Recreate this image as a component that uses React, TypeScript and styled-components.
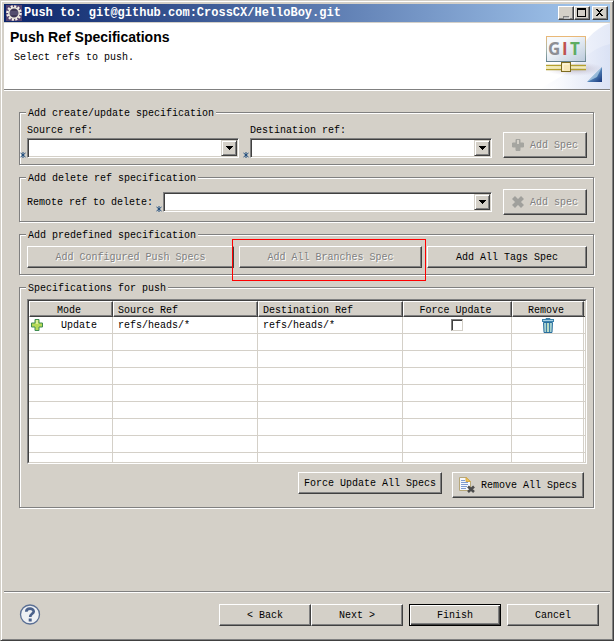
import React from "react";
import styled, { createGlobalStyle, css } from "styled-components";

const face = "#d4d0c8";
const gray = "#808080";
const dark = "#404040";
const mono = '"Liberation Mono", "Courier New", monospace';

const GlobalStyle = createGlobalStyle`
  *, *::before, *::after { box-sizing: border-box; }
  body {
    margin: 0;
    background: ${face};
    color: #000;
    font: 10px/12px ${mono};
  }
  button, select, input { font: inherit; color: inherit; margin: 0; }
`;

const Window = styled.div`
  display: flex;
  flex-direction: column;
  min-height: 100vh;
  padding: 3px;
  background: ${face};
  border: 1px solid;
  border-color: ${face} ${dark} ${dark} ${face};
  box-shadow: inset 1px 1px 0 #fff, inset -1px -1px 0 ${gray};
`;

const TitleBar = styled.header`
  display: flex;
  align-items: center;
  height: 18px;
  margin-bottom: 1px;
  padding: 0 2px;
  background: linear-gradient(90deg, #0a246a, #a6caf0);
`;

const TitleText = styled.h1`
  flex: 1;
  margin: 0 0 0 2px;
  color: #fff;
  font: bold 12px/18px ${mono};
  white-space: nowrap;
  overflow: hidden;
`;

const TitleButton = styled.button<{ $apart?: boolean }>`
  display: block;
  width: 16px;
  height: 14px;
  margin-left: ${(p) => (p.$apart ? 2 : 0)}px;
  padding: 0;
  background: ${face};
  border: 1px solid;
  border-color: #fff ${dark} ${dark} #fff;
  box-shadow: inset -1px -1px 0 ${gray};
  svg { display: block; }
`;

const Banner = styled.div`
  display: flex;
  justify-content: space-between;
  height: 68px;
  background: #fff;
  border-bottom: 1px solid #fff;
  box-shadow: inset 0 -1px 0 ${gray};
  svg { display: block; flex: none; }
`;

const BannerTitle = styled.h2`
  margin: 6px 0 0 6px;
  font: bold 14px/17px "Liberation Sans", Arial, sans-serif;
`;

const BannerHint = styled.p`
  margin: 6px 0 0 10px;
`;

const Main = styled.main`
  display: flex;
  flex: 1;
  flex-direction: column;
  gap: 6px;
  padding: 15px 16px 15px 15px;
`;

const Group = styled.fieldset`
  min-width: 0;
  margin: 0;
  padding: 5px 6px 6px 7px;
  border: 1px solid ${gray};
  box-shadow: 1px 1px 0 #fff, inset 1px 1px 0 #fff;
`;

const Legend = styled.legend`
  margin-left: -1px;
  padding: 2px 2px 0;
  line-height: 11px;
  background: ${face};
`;

const SpecGrid = styled.div`
  display: grid;
  grid-template-columns: 212fr 242fr 84px;
  column-gap: 11px;
  align-items: end;
`;

const Field = styled.div`
  display: flex;
  flex-direction: column;
  gap: 1px;
  padding-top: 1px;
`;

const DeleteRow = styled.div`
  display: flex;
  align-items: center;
  gap: 11px;
`;

const DeleteLabel = styled.label`
  flex: none;
  margin-right: -1px;
  padding-top: 2px;
`;

const ComboBox = styled.div`
  position: relative;
  flex: 1;
  select {
    display: block;
    width: 100%;
    height: 20px;
    padding: 0 20px 0 4px;
    appearance: none;
    background: #fff;
    border: 1px solid;
    border-color: ${gray} #fff #fff ${gray};
    border-radius: 0;
    box-shadow: inset 1px 1px 0 ${dark}, inset -1px -1px 0 ${face};
  }
`;

const ComboArrow = styled.span`
  position: absolute;
  top: 2px;
  right: 2px;
  display: grid;
  place-items: center;
  width: 16px;
  height: 16px;
  background: ${face};
  border: 1px solid;
  border-color: ${face} ${dark} ${dark} ${face};
  box-shadow: inset 1px 1px 0 #fff, inset -1px -1px 0 ${gray};
  pointer-events: none;
`;

const AssistMark = styled.svg`
  position: absolute;
  left: -7px;
  bottom: 0;
`;

const PushButton = styled.button<{ $tall?: boolean; $default?: boolean; $w?: number }>`
  display: flex;
  align-items: center;
  justify-content: center;
  gap: 6px;
  width: ${(p) => (p.$w ? `${p.$w}px` : "100%")};
  ${(p) => p.$w && css`flex: none;`}
  height: ${(p) => (p.$tall ? 26 : 22)}px;
  padding: 0 2px;
  background: ${face};
  border: 1px solid;
  border-color: ${(p) => (p.$default ? "#000" : `#fff ${dark} ${dark} #fff`)};
  box-shadow: ${(p) =>
    p.$default
      ? `inset 1px 1px 0 #fff, inset -1px -1px 0 ${dark}, inset -2px -2px 0 ${gray}`
      : `inset -1px -1px 0 ${gray}`};
  white-space: nowrap;
  &:disabled {
    color: ${gray};
    text-shadow: 1px 1px 0 #fff;
  }
`;

const Caption = styled.span`
  padding-top: 2px;
`;

const ButtonRow = styled.div`
  display: grid;
  grid-template-columns: minmax(0, 207fr) minmax(0, 183fr) minmax(0, 160fr);
  gap: 5px;
`;

const Marked = styled.div`
  position: relative;
`;

const RedFrame = styled.div`
  position: absolute;
  inset: -7px -4px -13px -7px;
  border: 1px solid #f00;
  pointer-events: none;
`;

const TableBox = styled.div`
  border: 1px solid;
  border-color: ${gray} #fff #fff ${gray};
`;

const SpecTable = styled.table`
  width: 100%;
  table-layout: fixed;
  border-collapse: separate;
  border-spacing: 0;
  background: #fff;
  border: 1px solid;
  border-color: ${dark} ${face} ${face} ${dark};
`;

const HeadCell = styled.th<{ $left?: boolean }>`
  height: 16px;
  padding: ${(p) => (p.$left ? "2px 4px 0" : "2px 4px 0 0")};
  text-align: ${(p) => (p.$left ? "left" : "center")};
  font-weight: normal;
  line-height: 11px;
  background: ${face};
  border: 1px solid;
  border-color: #fff ${dark} ${dark} #fff;
  box-shadow: inset -1px -1px 0 ${gray};
  &:last-child { padding: 0; border-right: 0; border-left: 0; box-shadow: none; }
`;

const Cell = styled.td<{ $center?: boolean }>`
  height: 17px;
  padding: ${(p) => (p.$center ? "0" : "2px 5px 0")};
  text-align: ${(p) => (p.$center ? "center" : "left")};
  border: 0 solid ${face};
  border-width: 0 1px 1px 0;
  &:last-child { padding: 0; border-right: 0; }
  tr:last-child > & { height: 9px; border-bottom: 0; }
`;

const ModeContent = styled.span`
  display: flex;
  align-items: center;
  gap: 18px;
  padding-left: 2px;
`;

const Check = styled.input`
  display: block;
  width: 12px;
  height: 12px;
  margin: 0 auto;
  appearance: none;
  background: #fff;
  border: 1px solid;
  border-color: ${gray} ${face} ${face} ${gray};
  box-shadow: inset 1px 1px 0 ${dark};
  &:checked { background: ${dark}; }
`;

const IconButton = styled.button`
  display: inline-block;
  vertical-align: top;
  padding: 0;
  background: none;
  border: 0;
  svg { display: block; }
`;

const TableActions = styled.div`
  display: flex;
  justify-content: flex-end;
  align-items: flex-start;
  gap: 10px;
  padding: 8px 3px 3px 0;
`;

const Footer = styled.footer`
  display: flex;
  align-items: flex-start;
  justify-content: space-between;
  padding: 12px 11px 11px 15px;
  border-top: 1px solid ${gray};
  box-shadow: inset 0 1px 0 #fff;
`;

const FooterButtons = styled.div`
  display: flex;
  gap: 6px;
`;

const Pair = styled.div`
  display: flex;
`;

const GearIcon = () => (
  <svg width="16" height="16" viewBox="0 0 16 16" aria-hidden="true">
    <rect width="16" height="16" fill="#54416f" />
    <circle cx="8" cy="8" r="6.6" fill="none" stroke="#f4f0e6" strokeWidth="2.4" strokeDasharray="2.1 1.35" />
    <circle cx="8" cy="8" r="5.2" fill="#3d3656" stroke="#ece8df" strokeWidth="1.4" />
    <path d="M4 7h8M4 9h8" stroke="#6b6488" />
  </svg>
);

const BannerArt = () => (
  <svg width="75" height="66" viewBox="0 0 75 66" role="img" aria-label="GIT">
    <defs>
      <linearGradient id="sky" x1="0" y1="0" x2="1" y2="0">
        <stop offset="0" stopColor="#fff" />
        <stop offset="1" stopColor="#d8e0f4" />
      </linearGradient>
      <linearGradient id="board" x1="0" y1="0" x2="1" y2="1">
        <stop offset="0.3" stopColor="#f6f9fc" />
        <stop offset="1" stopColor="#bccbdc" />
      </linearGradient>
      <linearGradient id="rim" x1="0" y1="0" x2="0" y2="1">
        <stop offset="0" stopColor="#e9b877" />
        <stop offset="0.5" stopColor="#a9b8ad" />
        <stop offset="1" stopColor="#668695" />
      </linearGradient>
      <linearGradient id="corner" x1="0" y1="0" x2="1" y2="1">
        <stop offset="0.2" stopColor="#c3dcf0" />
        <stop offset="0.55" stopColor="#4f7fb5" />
        <stop offset="1" stopColor="#16357a" />
      </linearGradient>
      <radialGradient id="shade">
        <stop offset="0" stopColor="#a99fb0" stopOpacity="0.7" />
        <stop offset="1" stopColor="#c6bfd0" stopOpacity="0" />
      </radialGradient>
    </defs>
    <path d="M75 0C58 6 47 20 42 36C37 50 20 56 5 66H75Z" fill="url(#sky)" opacity="0.7" />
    <path d="M75 21C56 25 43 40 14 66H75Z" fill="url(#sky)" opacity="0.8" />
    <ellipse cx="40" cy="46" rx="30" ry="7" fill="url(#shade)" />
    <rect x="11.5" y="13.5" width="39" height="25" fill="url(#board)" stroke="url(#rim)" />
    <path d="M11 38.5H51" stroke="#65808b" />
    <g fontFamily="Open Sans, sans-serif" fontWeight="700" fontSize="17">
      <text x="13" y="32" fill="#8d8f94">G</text>
      <text x="27" y="32" fill="#bf514f">I</text>
      <text x="35" y="32" fill="#5eac62">T</text>
    </g>
    <path d="M29 39v3M33 39v3" stroke="#a99b45" strokeWidth="2" />
    <path d="M11 42.5H51M11 46.5H51" stroke="#b4a02e" strokeWidth="1.4" />
    <path d="M11 44.5H51" stroke="#f6edae" strokeWidth="2" />
    <rect x="26.5" y="39.5" width="9" height="9" fill="#f8e8b8" stroke="#7d6c20" />
    <path d="M28 47v-6h6" fill="none" stroke="#fffbe7" />
    <path d="M67 44V59H52Z" fill="url(#corner)" />
    <path d="M67 44L62 54L52 59Z" fill="#c7e2f2" opacity="0.6" />
  </svg>
);

const PlusIcon = ({ muted = false }: { muted?: boolean }) => (
  <svg width="12" height="12" viewBox="0 0 12 12" aria-hidden="true">
    <path
      d="M4 .5h4V4h3.500v4H8v3.500H4V8H.5V4H4z"
      fill={muted ? "#a5a5a0" : "#b6d957"}
      stroke={muted ? "#a5a5a0" : "#3f8c50"}
    />
    <path d="M6 1v4" stroke={muted ? "#d4d0c8" : "#dcee9a"} strokeWidth="2" />
  </svg>
);

const CrossIcon = () => (
  <svg width="12" height="12" viewBox="0 0 12 12" aria-hidden="true">
    <path d="M1.500 1.500L10.500 10.500M10.500 1.500L1.500 10.500" stroke="#a0a09c" strokeWidth="4.200" />
  </svg>
);

const TrashIcon = () => (
  <svg width="12" height="15" viewBox="0 0 12 15" aria-hidden="true">
    <path d="M4 1.5V.5h4v1" fill="none" stroke="#3a7da5" />
    <rect x="0.5" y="1.5" width="11" height="2" fill="#a8d2e6" stroke="#3d83ac" />
    <path d="M1.500 4.500h9l-.5 10H2z" fill="#a5d0d0" stroke="#2a6f9f" />
    <path d="M4.500 5v9M7.500 5v9" stroke="#3b7fa8" />
    <path d="M6 5v9" stroke="#cfe6b8" />
  </svg>
);

const RemoveAllIcon = () => (
  <svg width="16" height="16" viewBox="0 0 16 16" aria-hidden="true">
    <path d="M.5.5h7l4 4v9H.5z" fill="#f5f8fd" stroke="#b7a779" />
    <path d="M7 .5v4h4.500z" fill="#efc45c" stroke="#d5a844" />
    <path d="M2 3.500h4M2 5.500h7M2 7.500h7M2 9.500h6M2 11.500h5" stroke="#7e9bd0" />
    <path d="M9 9.500L15 15M15 9.500L9 15" stroke="#4c4c4c" strokeWidth="2.600" />
  </svg>
);

const HelpIcon = () => (
  <svg width="22" height="22" viewBox="0 0 22 22" aria-hidden="true">
    <circle cx="11" cy="10.500" r="9.500" fill="#eef0f3" stroke="#5a6f94" strokeWidth="1.300" />
    <path d="M7.300 7.800C7.300 3.700 14.700 3.700 14.700 7.500C14.700 9.800 11.200 9.900 11.200 13" fill="none" stroke="#4b618b" strokeWidth="2.700" />
    <rect x="9.700" y="14.500" width="3" height="3" fill="#4b618b" />
  </svg>
);

const Combo = ({ id }: { id: string }) => (
  <ComboBox>
    <select id={id} defaultValue="">
      <option value="" />
    </select>
    <ComboArrow>
      <svg width="7" height="4" viewBox="0 0 7 4" shapeRendering="crispEdges" aria-hidden="true">
        <path d="M0 0H7V1H6V2H5V3H4V4H3V3H2V2H1V1H0Z" />
      </svg>
    </ComboArrow>
    <AssistMark width="6" height="6" viewBox="0 0 6 6" aria-hidden="true">
      <path d="M3 0V6M.5 1L5.500 5M5.500 1L.5 5" stroke="#1c4a7c" fill="none" />
    </AssistMark>
  </ComboBox>
);

const emptyRows = [1, 2, 3, 4, 5, 6, 7, 8];
const columns = [0, 1, 2, 3, 4, 5];

export default function App() {
  return (
    <>
      <GlobalStyle />
      <Window>
        <TitleBar>
          <GearIcon />
          <TitleText>Push to: git@github.com:CrossCX/HelloBoy.git</TitleText>
          <TitleButton aria-label="Minimize">
            <svg width="14" height="12" viewBox="0 0 14 12">
              <path d="M4 9H10V11H4Z" fill={gray} />
              <path d="M5 11H11" stroke="#fff" />
            </svg>
          </TitleButton>
          <TitleButton aria-label="Maximize">
            <svg width="14" height="12" viewBox="0 0 14 12" shapeRendering="crispEdges">
              <path d="M2 1H11V10H2ZM3 3V9H10V3Z" fillRule="evenodd" />
            </svg>
          </TitleButton>
          <TitleButton aria-label="Close" $apart>
            <svg width="14" height="12" viewBox="0 0 14 12" shapeRendering="crispEdges">
              <path d="M3 2H5V3H6V4H7V3H8V2H10V3H9V4H8V5H7V6H8V7H9V8H10V9H8V8H7V7H6V8H5V9H3V8H4V7H5V6H6V5H5V4H4V3H3Z" />
            </svg>
          </TitleButton>
        </TitleBar>

        <Banner>
          <div>
            <BannerTitle>Push Ref Specifications</BannerTitle>
            <BannerHint>Select refs to push.</BannerHint>
          </div>
          <BannerArt />
        </Banner>

        <Main>
          <Group>
            <Legend>Add create/update specification</Legend>
            <SpecGrid>
              <Field>
                <label htmlFor="source">Source ref:</label>
                <Combo id="source" />
              </Field>
              <Field>
                <label htmlFor="destination">Destination ref:</label>
                <Combo id="destination" />
              </Field>
              <PushButton $tall disabled>
                <PlusIcon muted />
                <Caption>Add Spec</Caption>
              </PushButton>
            </SpecGrid>
          </Group>

          <Group>
            <Legend>Add delete ref specification</Legend>
            <DeleteRow>
              <DeleteLabel htmlFor="remote">Remote ref to delete:</DeleteLabel>
              <Combo id="remote" />
              <PushButton $tall $w={84} disabled>
                <CrossIcon />
                <Caption>Add spec</Caption>
              </PushButton>
            </DeleteRow>
          </Group>

          <Group>
            <Legend>Add predefined specification</Legend>
            <ButtonRow>
              <PushButton disabled>
                <Caption>Add Configured Push Specs</Caption>
              </PushButton>
              <Marked>
                <PushButton disabled>
                  <Caption>Add All Branches Spec</Caption>
                </PushButton>
                <RedFrame />
              </Marked>
              <PushButton>
                <Caption>Add All Tags Spec</Caption>
              </PushButton>
            </ButtonRow>
          </Group>

          <Group>
            <Legend>Specifications for push</Legend>
            <TableBox>
              <SpecTable>
                <colgroup>
                  <col width="84" />
                  <col width="145" />
                  <col width="145" />
                  <col width="109" />
                  <col width="72" />
                  <col />
                </colgroup>
                <thead>
                  <tr>
                    <HeadCell>Mode</HeadCell>
                    <HeadCell $left>Source Ref</HeadCell>
                    <HeadCell $left>Destination Ref</HeadCell>
                    <HeadCell>Force Update</HeadCell>
                    <HeadCell>Remove</HeadCell>
                    <HeadCell />
                  </tr>
                </thead>
                <tbody>
                  <tr>
                    <Cell $center>
                      <ModeContent>
                        <PlusIcon />
                        <Caption>Update</Caption>
                      </ModeContent>
                    </Cell>
                    <Cell>refs/heads/*</Cell>
                    <Cell>refs/heads/*</Cell>
                    <Cell $center>
                      <Check type="checkbox" aria-label="Force Update" />
                    </Cell>
                    <Cell $center>
                      <IconButton aria-label="Remove">
                        <TrashIcon />
                      </IconButton>
                    </Cell>
                    <Cell />
                  </tr>
                  {emptyRows.map((row) => (
                    <tr key={row}>
                      {columns.map((col) => (
                        <Cell key={col} />
                      ))}
                    </tr>
                  ))}
                </tbody>
              </SpecTable>
            </TableBox>
            <TableActions>
              <PushButton $w={144}>
                <Caption>Force Update All Specs</Caption>
              </PushButton>
              <PushButton $tall $w={132}>
                <RemoveAllIcon />
                <Caption>Remove All Specs</Caption>
              </PushButton>
            </TableActions>
          </Group>
        </Main>

        <Footer>
          <IconButton aria-label="Help">
            <HelpIcon />
          </IconButton>
          <FooterButtons>
            <Pair>
              <PushButton $w={92}>
                <Caption>&lt; Back</Caption>
              </PushButton>
              <PushButton $w={92}>
                <Caption>Next &gt;</Caption>
              </PushButton>
            </Pair>
            <PushButton $w={92} $default>
              <Caption>Finish</Caption>
            </PushButton>
            <PushButton $w={92}>
              <Caption>Cancel</Caption>
            </PushButton>
          </FooterButtons>
        </Footer>
      </Window>
    </>
  );
}
